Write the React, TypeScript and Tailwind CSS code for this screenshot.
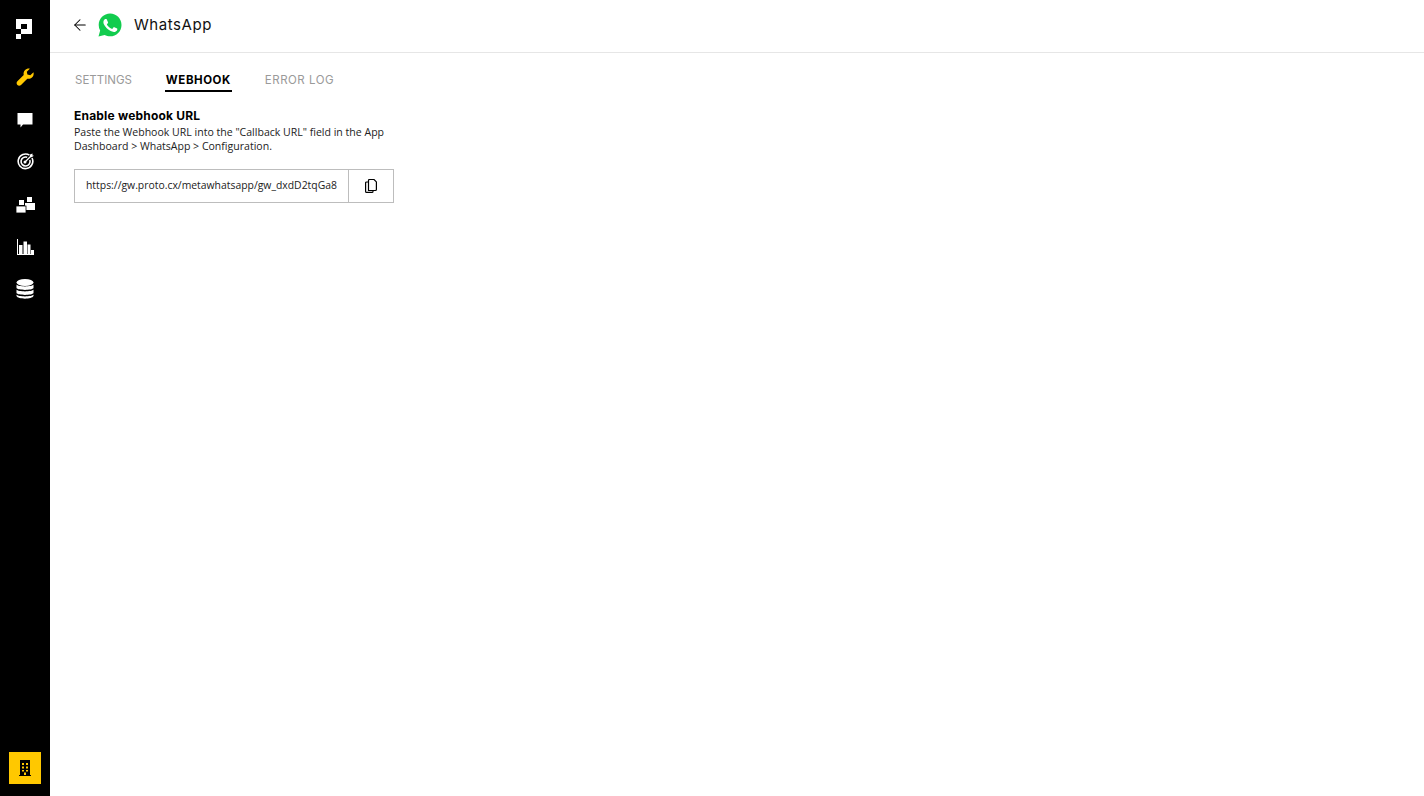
import { ArrowLeft } from "lucide-react";

function Logo() {
  return (
    <svg width="16" height="20" viewBox="0 0 16 20" fill="#fff">
      <path fillRule="evenodd" d="M0 0h16v15H5v-5H0zM5 5v5h6V5z" />
      <rect x="0" y="15" width="5" height="5" />
    </svg>
  );
}

function Wrench() {
  return (
    <svg width="18" height="20" viewBox="0 0 18 20" fill="#ffc800">
      <path d="M17.500 4.200c.5 2-.1 4-1.500 5.300-1.300 1.200-3 1.600-4.700 1.200L5 17c-.9.9-2.600 1-3.600 0-1.100-1-1-2.700 0-3.700l6.300-6.200C7.300 5.400 7.700 3.600 8.900 2.300 10.200 1 12 .4 13.800.7l-3 3 .6 2.900 2.900.7z" />
    </svg>
  );
}

function Chat() {
  return (
    <svg width="16" height="15" viewBox="0 0 16 15" fill="#fff">
      <path d="M.500 0h15v11.500H6L3.500 14.500v-3H.500z" />
    </svg>
  );
}

function Target() {
  return (
    <svg width="17" height="19" viewBox="0 0 17 19" fill="none" stroke="#fff">
      <path d="M12.500 2.200A7.300 7.300 0 1 0 15 5" strokeWidth="1.600" />
      <path d="M10.200 4.300A4.500 4.500 0 1 0 12.800 7" strokeWidth="1.600" />
      <circle cx="8" cy="9" r="1.500" fill="#fff" stroke="none" />
      <path d="M8 9l6-6" strokeWidth="1.200" />
      <path d="M13 1.500l2.500-1v2l1.500.2-2.500 1.500h-1.500z" fill="#fff" stroke="none" />
    </svg>
  );
}

function Blocks() {
  return (
    <svg width="19" height="18" viewBox="0 -2 19 18" fill="#fff">
      <rect x="3" y="3" width="5" height="5" />
      <rect x="11" y="0" width="5" height="5" />
      <rect x="9" y="6" width="10" height="7" />
      <rect x="0" y="9" width="10" height="7" stroke="#000" strokeWidth="0.800" />
    </svg>
  );
}

function Bars() {
  return (
    <svg width="17" height="18" viewBox="0 -2 17 18" fill="#fff">
      <rect x="0" y="0" width="1" height="16" />
      <rect x="0" y="15" width="17" height="1" />
      <rect x="2" y="6" width="3.500" height="10" />
      <rect x="6.500" y="2.500" width="3.500" height="13.500" />
      <rect x="10.500" y="5.500" width="3" height="10.500" />
      <rect x="14" y="11" width="3" height="5" />
    </svg>
  );
}

function Database() {
  return (
    <svg width="18" height="22" viewBox="0 -2 18 22" fill="#fff">
      <ellipse cx="9" cy="3.500" rx="8.500" ry="3.500" />
      <path d="M.500 5.500C2 8 16 8 17.500 5.500V9C16 11.500 2 11.500 .500 9z" />
      <path d="M.500 10.500C2 13 16 13 17.500 10.500V14C16 16.500 2 16.500 .500 14z" />
      <path d="M.500 15.500C2 18 16 18 17.500 15.500V17C16 20.500 2 20.500 .500 17z" />
    </svg>
  );
}

function Building() {
  return (
    <svg width="12" height="16" viewBox="0 0 12 16">
      <rect x="1" y="0" width="10" height="15" fill="#000" />
      <rect x="0" y="15" width="12" height="1" fill="#000" />
      <g fill="#ffc800">
        <rect x="3" y="3" width="2" height="2" />
        <rect x="7" y="3" width="2" height="2" />
        <rect x="3" y="6.500" width="2" height="2" />
        <rect x="7" y="6.500" width="2" height="2" />
        <rect x="3" y="10" width="2" height="1.500" />
        <rect x="7" y="10" width="2" height="1.500" />
        <rect x="5" y="12.500" width="2" height="2.500" />
      </g>
    </svg>
  );
}

function WhatsAppLogo() {
  return (
    <svg width="24" height="24" viewBox="0 0 24 24">
      <path
        fill="#12cc4e"
        d="M.5 23.500l1.650-6A11.400 11.400 0 0 1 .7 11.900C.7 5.600 5.800.5 12.100.5s11.400 5.100 11.400 11.400-5.100 11.400-11.400 11.400c-1.900 0-3.800-.5-5.500-1.400z"
      />
      <path
        fill="#fff"
        d="M8.800 6.600c-.2-.5-.5-.5-.7-.5h-.6c-.2 0-.6.1-.9.400-.3.3-1.200 1.100-1.200 2.800s1.200 3.300 1.400 3.500c.2.200 2.400 3.800 5.900 5.200 2.900 1.100 3.500.9 4.100.9.600-.1 2-.8 2.300-1.600.3-.8.3-1.500.2-1.600-.1-.1-.3-.2-.7-.4l-2.300-1.100c-.3-.1-.5-.2-.8.2l-1.100 1.300c-.2.200-.4.300-.8.100-.3-.2-1.400-.5-2.700-1.700-1-.9-1.700-2-1.900-2.300-.2-.3 0-.5.1-.7l.5-.6c.2-.2.2-.3.4-.6.1-.2.1-.4 0-.6z"
      />
    </svg>
  );
}

function CopyIcon() {
  return (
    <svg width="12" height="14" viewBox="0 0 12 14" fill="none" stroke="#000" strokeWidth="1.200">
      <path d="M3.500 11.500V1.500q0-1 1-1h4.500l2.400 2.400v7.600q0 1-1 1z" />
      <path d="M3.500 3H1.600q-1 0-1 1v8.400q0 1 1 1h5.400q1 0 1-1v-1" />
    </svg>
  );
}

const navIcons = [<Wrench />, <Chat />, <Target />, <Blocks />, <Bars />, <Database />];

export default function App() {
  return (
    <div className="flex h-[796px] w-full bg-white font-['Open_Sans',sans-serif] text-black">
      <aside className="flex w-[50px] shrink-0 flex-col items-center bg-black pt-[19px] pb-3">
        <div className="mb-[18px] -ml-[2px]">
          <Logo />
        </div>
        <div className="flex flex-col items-center">
          {navIcons.map((icon, i) => (
            <div key={i} className="flex h-[42px] items-center justify-center">
              {icon}
            </div>
          ))}
        </div>
        <button className="mt-auto flex h-8 w-8 items-center justify-center bg-[#ffc800]">
          <Building />
        </button>
      </aside>

      <main className="flex-1">
        <header className="flex h-[53px] items-center border-b border-[#e6e6e6] pb-[2px] pl-[21px]">
          <ArrowLeft size={18} strokeWidth={1.4} className="mr-[9px] mb-px" />
          <WhatsAppLogo />
          <h1 className="ml-3 font-['Inter',sans-serif] text-[15px] font-normal tracking-[0.55px] text-[#111]">WhatsApp</h1>
        </header>

        <div className="pl-[24px]">
          <nav className="flex h-[39px] gap-8 font-['Inter',sans-serif] text-[11.500px]">
            <div className="flex items-center px-px pt-[25px] pb-[8px] font-normal text-[#9a9a9a]">SETTINGS</div>
            <div className="flex items-center border-b-2 border-black px-px pt-[25px] pb-[6px] font-bold tracking-[0.55px]">WEBHOOK</div>
            <div className="flex items-center px-px pt-[25px] pb-[8px] font-normal tracking-[0.5px] text-[#9a9a9a]">ERROR LOG</div>
          </nav>

          <h2 className="mt-[16px] font-['Inter',sans-serif] text-[12px] leading-[16px] font-bold tracking-[0.2px]">Enable webhook URL</h2>
          <p className="mt-px w-[330px] text-[10.560px] leading-[14px] text-[#222]">
            Paste the Webhook URL into the "Callback URL" field in the App Dashboard &gt; WhatsApp &gt; Configuration.
          </p>

          <div className="mt-4 flex h-[34px] w-[320px] border border-[#bdbdbd]">
            <div className="flex flex-1 items-center overflow-hidden border-r border-[#bdbdbd] pl-[11px] text-[10.400px] whitespace-nowrap text-[#222]">
              https://gw.proto.cx/metawhatsapp/gw_dxdD2tqGa8
            </div>
            <button className="flex w-[44px] items-center justify-center">
              <CopyIcon />
            </button>
          </div>
        </div>
      </main>
    </div>
  );
}
